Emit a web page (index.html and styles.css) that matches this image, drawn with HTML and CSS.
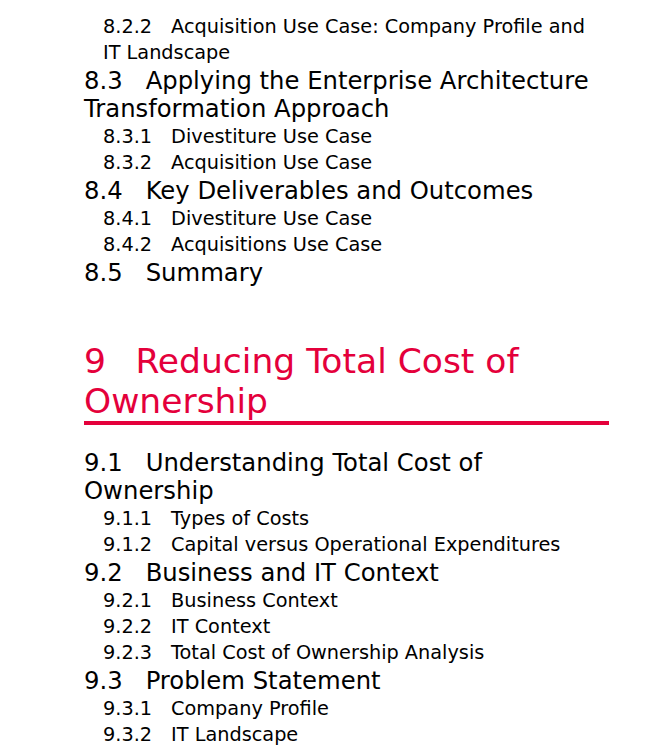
FILE: index.html
```html
<!DOCTYPE html>
<html lang="en">
<head>
<meta charset="utf-8">
<title>Contents</title>
<link rel="stylesheet" href="styles.css">
</head>
<body>
<div class="page">
  <div class="l3"><span class="num">8.2.2</span>Acquisition Use Case: Company Profile and IT Landscape</div>
  <div class="l2"><span class="num">8.3</span>Applying the Enterprise Architecture Transformation Approach</div>
  <div class="l3"><span class="num">8.3.1</span>Divestiture Use Case</div>
  <div class="l3"><span class="num">8.3.2</span>Acquisition Use Case</div>
  <div class="l2"><span class="num">8.4</span>Key Deliverables and Outcomes</div>
  <div class="l3"><span class="num">8.4.1</span>Divestiture Use Case</div>
  <div class="l3"><span class="num">8.4.2</span>Acquisitions Use Case</div>
  <div class="l2"><span class="num">8.5</span>Summary</div>

  <h1 class="l1"><span class="num">9</span>Reducing Total Cost of Ownership</h1>

  <div class="l2"><span class="num">9.1</span>Understanding Total Cost of Ownership</div>
  <div class="l3"><span class="num">9.1.1</span>Types of Costs</div>
  <div class="l3"><span class="num">9.1.2</span>Capital versus Operational Expenditures</div>
  <div class="l2"><span class="num">9.2</span>Business and IT Context</div>
  <div class="l3"><span class="num">9.2.1</span>Business Context</div>
  <div class="l3"><span class="num">9.2.2</span>IT Context</div>
  <div class="l3"><span class="num">9.2.3</span>Total Cost of Ownership Analysis</div>
  <div class="l2"><span class="num">9.3</span>Problem Statement</div>
  <div class="l3"><span class="num">9.3.1</span>Company Profile</div>
  <div class="l3"><span class="num">9.3.2</span>IT Landscape</div>
</div>
</body>
</html>
```

FILE: styles.css
```css
html, body {
  margin: 0;
  padding: 0;
  background: #ffffff;
}

body {
  font-family: "DejaVu Sans", Verdana, sans-serif;
  color: #000000;
}

.page {
  width: 525px;
  padding: 14px 0 0 84px;
}

.l3 {
  font-size: 19.3px;
  line-height: 26px;
  padding: 0 4px 0 19px;
}

.l3 .num {
  margin-right: 19px;
}

.l2 {
  font-size: 24.3px;
  line-height: 28px;
  margin: 1px 0;
}

.l2 .num {
  margin-right: 23px;
}

.l1 {
  font-size: 34.5px;
  font-weight: normal;
  line-height: 40px;
  color: #e4003b;
  margin: 54px 0 24px 0;
  padding: 0;
  border-bottom: 4px solid #e4003b;
}

.l1 .num {
  margin-right: 29.5px;
}
```
